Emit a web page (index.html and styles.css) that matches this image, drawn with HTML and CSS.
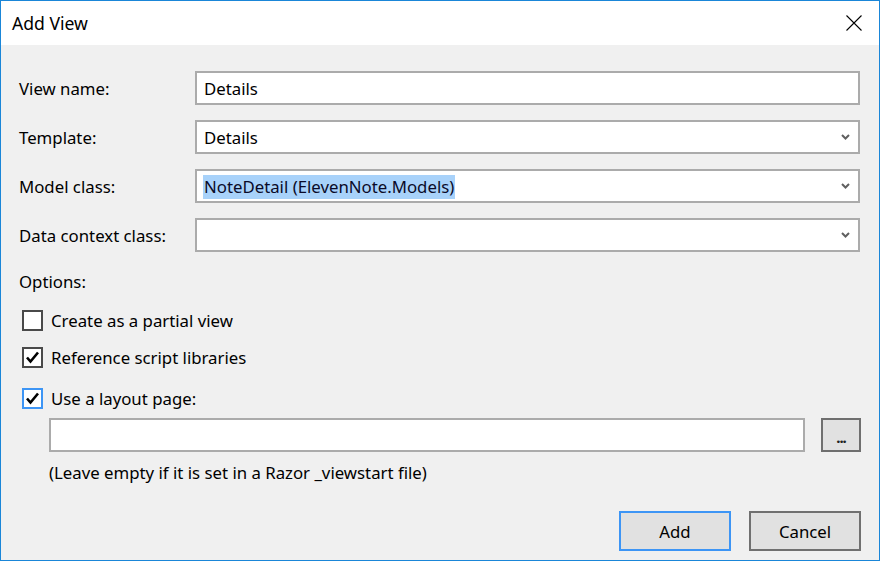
FILE: index.html
```html
<!DOCTYPE html>
<html>
<head>
<meta charset="utf-8">
<link rel="stylesheet" href="styles.css">
</head>
<body>
<div class="window">
  <div class="titlebar">
    <span class="title">Add View</span>
    <svg class="close" width="16" height="16" viewBox="0 0 16 16"><path d="M0.5 0.5 L15.5 15.5 M15.5 0.5 L0.5 15.5" stroke="#000" stroke-width="1.1" fill="none"/></svg>
  </div>
  <div class="content">
    <div class="fields">
      <label class="lbl">View name:</label>
      <div class="input"><span class="val">Details</span></div>
      <label class="lbl">Template:</label>
      <div class="input combo"><span class="val">Details</span><svg class="chev" width="9" height="6" viewBox="0 0 9 6"><path d="M1 1 L4.5 4.5 L8 1" stroke="#606060" stroke-width="2" fill="none"/></svg></div>
      <label class="lbl">Model class:</label>
      <div class="input combo"><span class="val sel">NoteDetail (ElevenNote.Models)</span><svg class="chev" width="9" height="6" viewBox="0 0 9 6"><path d="M1 1 L4.5 4.5 L8 1" stroke="#606060" stroke-width="2" fill="none"/></svg></div>
      <label class="lbl">Data context class:</label>
      <div class="input combo"><span class="val"></span><svg class="chev" width="9" height="6" viewBox="0 0 9 6"><path d="M1 1 L4.5 4.5 L8 1" stroke="#606060" stroke-width="2" fill="none"/></svg></div>
    </div>
    <div class="options-label">Options:</div>
    <div class="check first"><span class="box"></span><span>Create as a partial view</span></div>
    <div class="check second"><span class="box"><svg width="17" height="17" viewBox="0 0 17 17"><path d="M3 8.5 L6.5 12.5 L14 3.5" stroke="#000" stroke-width="2.6" fill="none"/></svg></span><span>Reference script libraries</span></div>
    <div class="check third"><span class="box focus"><svg width="17" height="17" viewBox="0 0 17 17"><path d="M3 8.5 L6.5 12.5 L14 3.5" stroke="#000" stroke-width="2.6" fill="none"/></svg></span><span>Use a layout page:</span></div>
    <div class="layout-row">
      <div class="input wide"></div>
      <button class="browse">...</button>
    </div>
    <div class="note">(Leave empty if it is set in a Razor _viewstart file)</div>
    <div class="buttons">
      <button class="btn default">Add</button>
      <button class="btn">Cancel</button>
    </div>
  </div>
</div>
</body>
</html>
```
FILE: styles.css
```css
html, body {
  margin: 0;
  padding: 0;
}
body {
  width: 880px;
  height: 561px;
  font-family: "Noto Sans", "Open Sans", sans-serif;
  font-size: 16.8px;
  color: #000;
}
.window {
  box-sizing: border-box;
  width: 880px;
  height: 561px;
  border: 1px solid #1a86d8;
  background: #f0f0f0;
  display: flex;
  flex-direction: column;
}
.titlebar {
  height: 44px;
  background: #fff;
  display: flex;
  align-items: center;
  justify-content: space-between;
  padding: 0 17px 0 11px;
  flex-shrink: 0;
}
.title {
  font-size: 17.6px;
}
.close {
  display: block;
}
.content {
  padding: 26px 19px 0 18px;
  display: flex;
  flex-direction: column;
}
.fields {
  display: grid;
  grid-template-columns: 176px 1fr;
  row-gap: 15px;
  align-items: center;
}
.lbl {
  padding-top: 1px;
}
.input {
  box-sizing: border-box;
  height: 34px;
  background: #fff;
  border: 2px solid #ababab;
  display: flex;
  align-items: center;
  padding: 1px 7px 0;
}
.combo {
  justify-content: space-between;
  padding-right: 8px;
}
.val {
  line-height: 24px;
  white-space: nowrap;
}
.sel {
  background: #a8d2fa;
  color: #0a0a28;
  margin-left: -1px;
  padding: 0 1px;
}
.chev {
  display: block;
  margin-top: -1px;
}
.options-label {
  margin-top: 18px;
  line-height: 24px;
}
.check {
  display: flex;
  align-items: center;
  gap: 8px;
  margin-left: 3px;
  height: 21px;
  line-height: 21px;
}
.check.first { margin-top: 16px; }
.check.second { margin-top: 16px; }
.check.third { margin-top: 20px; }
.box {
  box-sizing: border-box;
  width: 21px;
  height: 21px;
  border: 2px solid #4a4a4a;
  background: #fff;
  display: flex;
  align-items: center;
  justify-content: center;
  flex-shrink: 0;
}
.box.focus {
  border-color: #3d95f5;
}
.box svg {
  display: block;
}
.layout-row {
  display: flex;
  gap: 16px;
  margin-top: 9px;
  margin-left: 30px;
  margin-right: -1px;
}
.wide {
  flex: 1;
}
.browse {
  box-sizing: border-box;
  width: 40px;
  height: 34px;
  background: #e1e1e1;
  border: 2px solid #6f6f6f;
  font-family: inherit;
  font-size: 15px;
  padding: 4px 0 0;
  font-weight: bold;
  letter-spacing: -1px;
  color: #222;
}
.note {
  margin-top: 9px;
  margin-left: 30px;
  line-height: 24px;
}
.buttons {
  display: flex;
  justify-content: flex-end;
  gap: 18px;
  margin-top: 26px;
  margin-right: -1px;
}
.btn {
  box-sizing: border-box;
  width: 112px;
  height: 40px;
  background: #e1e1e1;
  border: 2px solid #707070;
  font-family: inherit;
  font-size: 16.8px;
  color: #000;
  padding: 0;
}
.btn.default {
  border-color: #3d95f5;
}
```
